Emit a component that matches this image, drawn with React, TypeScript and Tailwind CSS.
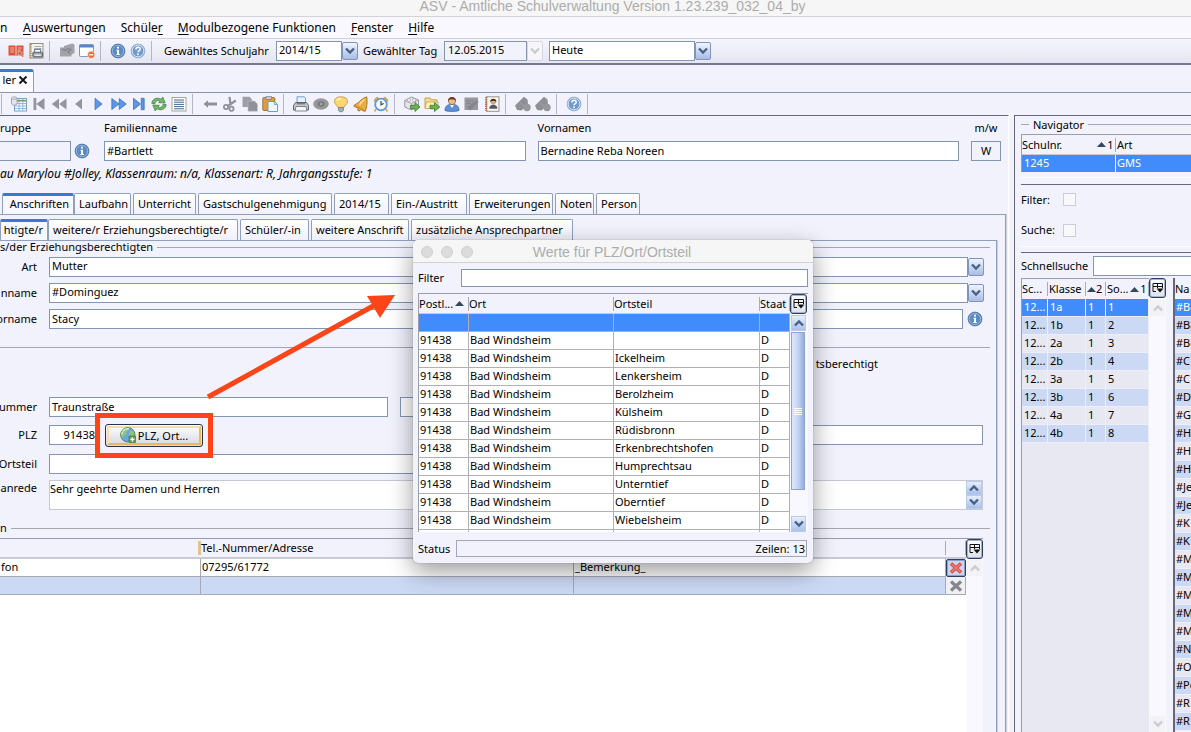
import React from "react";

const FIELD = "h-5 min-w-0 border border-[#8296b4] bg-white px-[2px] pb-[2px] outline-none";

/* ---------- icons ---------- */

type IconProps = { children: React.ReactNode; label: string };

function ToolButton({ children, label }: IconProps) {
  return (
    <button type="button" aria-label={label} className="flex h-5 w-5 shrink-0 items-center justify-center">
      <svg viewBox="0 0 16 16" className="h-4 w-4 overflow-visible">
        {children}
      </svg>
    </button>
  );
}

function Separator() {
  return <span className="h-5 w-px shrink-0 bg-[#b4b6c6]" />;
}

function InfoShape() {
  return (
    <>
      <circle cx="8" cy="8" r="6.9" fill="#5d8abf" stroke="#3f6795" strokeWidth="0.8" />
      <circle cx="8" cy="8" r="5.7" fill="none" stroke="#a3bfe0" strokeWidth="0.8" />
      <path d="M7 3.800h2v1.700H7zM6.500 6.700H9v4.300h.8v1H6.300v-1h.8V7.700h-.6z" fill="#fff" />
    </>
  );
}

function HelpShape() {
  return (
    <>
      <circle cx="8" cy="8" r="6.9" fill="#6f9bd0" stroke="#8aa4c6" strokeWidth="0.8" />
      <circle cx="8" cy="8" r="5.9" fill="none" stroke="#dfe9f6" strokeWidth="1" />
      <path d="M5.900 6.400c0-3 4.400-2.900 4.300-.2 0 1.500-2.100 1.500-2.100 3" fill="none" stroke="#fff" strokeWidth="1.500" />
      <circle cx="8.050" cy="11.200" r="0.950" fill="#fff" />
    </>
  );
}

const icons: Record<string, React.ReactNode> = {
  book: (
    <>
      <path d="M.5 2.500h6.500l1 .8 1-.8h6.500v10H9l-1 .8-1-.8H.5z" fill="#d9553a" />
      <path d="M8 3.300v9.500" stroke="#f7d3ca" strokeWidth="1" />
      <path d="M2.200 5h4M2.200 7h4M2.200 9h4M9.800 5h4M9.800 7h3" stroke="#f3c0b3" strokeWidth="0.900" />
      <path d="M10 8l4.800 1.500-1.600 1 2.500 2.800-1.200 1-2.500-2.800-1.200 1.500z" fill="#d9553a" stroke="#f7e6e2" strokeWidth="0.500" />
    </>
  ),
  printBook: (
    <>
      <rect x="2" y="0.500" width="13" height="14.500" fill="#f4f1ea" stroke="#8b8474" strokeWidth="0.900" />
      <path d="M2.800 1v14" stroke="#c49a4e" strokeWidth="2.200" strokeDasharray="1.200 1" />
      <path d="M6.500 3.500h7M6.500 5.500h7" stroke="#8aa3c2" strokeWidth="0.900" />
      <rect x="6.500" y="6.500" width="6" height="4" fill="#fff" stroke="#5f6873" strokeWidth="0.800" />
      <rect x="4.800" y="9.200" width="9.800" height="4.800" rx="1" fill="#9aa4b2" stroke="#4c5561" strokeWidth="0.900" />
      <path d="M6.500 12.200h6.400" stroke="#f4f4f4" strokeWidth="1.300" />
    </>
  ),
  puzzle: (
    <>
      <path d="M5 3l8-2.500 2.500 1v8.500l-3 1.500v2H1V4.500h4z" fill="#a2a3a8" />
      <path d="M3 6l3 1.500L9 5.500l3 1-3 2.500 2 1.500" fill="none" stroke="#808187" strokeWidth="1.100" />
    </>
  ),
  windowMinus: (
    <>
      <rect x="0.500" y="1.500" width="14" height="12" rx="0.800" fill="#fdfdff" stroke="#7d97bd" />
      <path d="M.5 2h14v2.500H.5z" fill="#5586cd" />
      <circle cx="12.200" cy="11.800" r="3.700" fill="#e8703a" stroke="#fff" strokeWidth="0.600" />
      <path d="M10.200 11.800h4" stroke="#fff" strokeWidth="1.300" />
    </>
  ),
  info: <InfoShape />,
  help: <HelpShape />,
  dataTable: (
    <>
      <rect x="3.500" y="2.500" width="12" height="12.500" fill="#f8fbff" stroke="#7ca0cb" />
      <path d="M4 7.500h11M4 10h11M4 12.500h11M8 3v12M11.800 3v12" stroke="#8fb0d8" strokeWidth="0.900" />
      <path d="M6 4.700h9" stroke="#6da157" strokeWidth="1.600" />
      <path d="M.5 2v6c0 1.500 5.500 1.500 5.500 0V2c0-1.500-5.500-1.500-5.500 0z" fill="#e3e4e8" stroke="#96989f" strokeWidth="0.800" />
      <path d="M.5 2.200c0 1.500 5.500 1.500 5.500 0" fill="none" stroke="#96989f" strokeWidth="0.700" />
    </>
  ),
  first: <path d="M2.500 2h2.800v12H2.500zM13.500 2v12L5.300 8z" fill="#92949e" />,
  rewind: <path d="M8 2.500v11L.8 8zM15.500 2.500v11L8.200 8z" fill="#92949e" />,
  prev: <path d="M11 2.500v11L4 8z" fill="#92949e" />,
  next: <path d="M4 2.200v11.600L11.200 8z" fill="#5c96e6" stroke="#3467b5" strokeWidth="0.600" />,
  forward: <path d="M.8 2.500v11L8 8zM8.200 2.500v11L15.300 8z" fill="#5c96e6" stroke="#3467b5" strokeWidth="0.700" />,
  last: <path d="M2.500 2.300v11.400L9.500 8zM10.200 2.300h3v11.400h-3z" fill="#5c96e6" stroke="#3467b5" strokeWidth="0.700" />,
  refresh: (
    <>
      <path d="M.8 7.500C1 3 6 .8 10.300 3.200L11.800 1l2.400 6-6.500-.3 1.300-1.700C6.200 3.800 4.200 5.500 4 7.700z" fill="#74b568" stroke="#3d7c3c" strokeWidth="0.700" />
      <path d="M15.200 8.500C15 13 10 15.200 5.700 12.800L4.200 15 1.800 9l6.500.3L7 11c2.800 1.200 4.800-.5 5-2.700z" fill="#74b568" stroke="#3d7c3c" strokeWidth="0.700" />
    </>
  ),
  list: (
    <>
      <rect x="1" y="1.500" width="14" height="13.500" fill="#fff" stroke="#a5a790" />
      <path d="M3 4h10M3 6.200h10M3 8.400h10M3 10.600h10M3 12.800h10" stroke="#45668e" strokeWidth="1" />
    </>
  ),
  back: <path d="M1.500 8l4.500-3.700v2.200h9v3H6v2.200z" fill="#8f9099" />,
  cut: (
    <>
      <path d="M7.500 .8l1.200 8.700M13.800 4.500L6 9.800" stroke="#8f9099" strokeWidth="2.200" fill="none" />
      <circle cx="4" cy="11" r="2.100" fill="none" stroke="#8f9099" strokeWidth="1.800" />
      <circle cx="9.500" cy="12.800" r="2.100" fill="none" stroke="#8f9099" strokeWidth="1.800" />
    </>
  ),
  copy: (
    <>
      <path d="M.5.8h7L10 3.500V11H.5z" fill="#9d9ea4" />
      <path d="M6 5h6.500L15.500 8v7.200H6z" fill="#909198" stroke="#c4c5cb" strokeWidth="0.600" />
    </>
  ),
  paste: (
    <>
      <rect x="0.800" y="1.500" width="12" height="13" rx="1" fill="#d99c4b" stroke="#9e6a27" strokeWidth="0.900" />
      <path d="M4 .5h5.500v3H4z" fill="#c8ccd4" stroke="#7b7f87" strokeWidth="0.700" />
      <path d="M6 5.500h6.500l3 3v7H6z" fill="#edf5ff" stroke="#6b90c2" strokeWidth="0.900" />
      <path d="M12.300 5.500v3h3" fill="none" stroke="#6b90c2" strokeWidth="0.800" />
    </>
  ),
  printer: (
    <>
      <path d="M4 .8h7L12.500 2v6H4z" fill="#e7f1fe" stroke="#6a94cc" strokeWidth="0.900" />
      <path d="M2.500 6.500h11l2 3v4.500H.5V9.500z" fill="#c3c6ce" stroke="#555961" strokeWidth="0.900" />
      <path d="M3 10.500h10l1 4.500H2z" fill="#f5f6f8" stroke="#6a6e76" strokeWidth="0.800" />
      <path d="M3.800 7.800h8.400" stroke="#5a5e66" strokeWidth="1" />
    </>
  ),
  eye: (
    <>
      <ellipse cx="8" cy="8" rx="7.800" ry="5.700" fill="#97979c" />
      <ellipse cx="8" cy="8" rx="3.500" ry="2.800" fill="#77777c" />
      <circle cx="8" cy="8" r="1.400" fill="#a5a5aa" />
    </>
  ),
  bulb: (
    <>
      <path d="M8 .8c-8 0-8 6.500-3.500 9.200l.5 1.500h6l.5-1.500C16 7.300 16 .8 8 .8z" fill="#fbd675" stroke="#d39b2f" strokeWidth="0.900" />
      <path d="M4 4.500c.8-1.600 2.200-2 4-2" stroke="#fff6d4" strokeWidth="1.600" fill="none" />
      <path d="M5.500 11.500h5v3l-1.200 1.200H6.700l-1.200-1.200z" fill="#a9adb5" stroke="#6f7279" strokeWidth="0.700" />
    </>
  ),
  bell: (
    <>
      <path d="M13.800.8c-3.300 1-6 3-8 5.500L.8 9.500l11.500 5.700C14 11.500 14.500 6 13.800.8z" fill="#e9ae3f" stroke="#a9721e" strokeWidth="0.900" />
      <path d="M.8 9.800l11.200 5.400" stroke="#c98a26" strokeWidth="1.800" />
      <path d="M11.500 3.500c-2 1.500-3.500 3-5 5.500" stroke="#fbe1a0" strokeWidth="1.500" fill="none" />
      <path d="M4.200 12.800a1.900 1.900 0 003.400 1.600z" fill="#a9721e" />
    </>
  ),
  clock: (
    <>
      <path d="M1 4l3-3 2 1.500L2 6zM15 4l-3-3-2 1.500L14 6z" fill="#e6a93f" stroke="#b07b25" strokeWidth="0.500" />
      <path d="M3 13l-1.500 2.500M13 13l1.500 2.500" stroke="#e0a33c" strokeWidth="1.500" />
      <circle cx="8" cy="8.500" r="5.800" fill="#f7fbff" stroke="#5c9ad4" strokeWidth="1.800" />
      <path d="M8 5v3.800l2.700-1.300" fill="none" stroke="#2f4767" strokeWidth="1.200" />
    </>
  ),
  boxExport: (
    <>
      <path d="M.8 4.500L7.500 1 14.500 4v6.500L7.500 14 .8 11z" fill="#e4e5e9" stroke="#8e9097" strokeWidth="0.900" />
      <path d="M.8 4.500l6.700 3 7-3.500M7.500 7.500V14" fill="none" stroke="#9b9da4" strokeWidth="0.800" />
      <circle cx="5" cy="4" r="1.500" fill="#fafafa" stroke="#9b9da4" strokeWidth="0.600" />
      <circle cx="10" cy="4" r="1.500" fill="#fafafa" stroke="#9b9da4" strokeWidth="0.600" />
      <path d="M6.500 9.300H11V6.500l5 4.500-5 4.500v-2.800H6.500z" fill="#6fb04f" stroke="#3c7a2e" strokeWidth="0.800" />
    </>
  ),
  folderExport: (
    <>
      <path d="M1 2h5l1.500 1.800H13V12H1z" fill="#f4dc93" stroke="#c19a3f" strokeWidth="0.900" />
      <path d="M2.500 6H14v6.500H1z" fill="#fdf0c0" stroke="#c19a3f" strokeWidth="0.700" />
      <path d="M6 9.300h4.500V6.500l5.300 4.500-5.300 4.500v-2.800H6z" fill="#6fb04f" stroke="#3c7a2e" strokeWidth="0.800" />
    </>
  ),
  person: (
    <>
      <path d="M1 14.500c0-5 3-6 7-6s7 1 7 6c-3 1.200-11 1.200-14 0z" fill="#5d90d6" stroke="#3463a3" strokeWidth="0.800" />
      <path d="M6 9l2 3 2-3z" fill="#fff" />
      <circle cx="8" cy="5" r="3.600" fill="#eabb8d" stroke="#7b4c24" strokeWidth="0.600" />
      <path d="M4 5.500C3.500-.5 12.500-.5 12 5.500 11 3.500 9 3.600 7 3.600 5.500 3.600 4.800 4 4 5.500z" fill="#70401c" />
    </>
  ),
  grayNote: (
    <>
      <rect x="0.500" y="1.500" width="13.500" height="12.500" fill="#97989d" />
      <path d="M3 11.500L12.500 4l2 2-8 8.500z" fill="#85868b" />
      <path d="M2.500 5h7M2.500 7.500h4" stroke="#828388" strokeWidth="1" />
    </>
  ),
  personBook: (
    <>
      <rect x="2.500" y="0.800" width="12.500" height="14.500" fill="#f8f6f2" stroke="#8f8a80" strokeWidth="0.900" />
      <path d="M2.200 1v14" stroke="#b8733f" strokeWidth="2.400" strokeDasharray="1.300 0.900" />
      <circle cx="9.300" cy="5.800" r="2.800" fill="#dba878" />
      <path d="M6.200 6C6 1.800 12.600 1.800 12.400 6c-2-1.800-4.200-1.800-6.200 0z" fill="#3d2a1c" />
      <path d="M5.300 12.800c0-3 1.700-4 4-4s4 1 4 4z" fill="#4f5866" />
    </>
  ),
  grayTag: (
    <>
      <path d="M0 9.500L9 .8l3.500 2.700.5 5-6.500 6-4.500-.5z" fill="#8f9096" />
      <circle cx="12" cy="11.500" r="3.700" fill="#97989e" />
      <path d="M5 6.500l4.500 4" stroke="#a9aab0" strokeWidth="0.700" />
    </>
  ),
};

function Tools({ names }: { names: string[] }) {
  return (
    <>
      {names.map((n, i) => (
        <ToolButton key={i} label={n}>
          {icons[n]}
        </ToolButton>
      ))}
    </>
  );
}

function Chevron({ up = false, muted = false }: { up?: boolean; muted?: boolean }) {
  return (
    <svg viewBox="0 0 10 8" className="h-2 w-[10px]">
      <path
        d={up ? "M1 6.500L5 2.500L9 6.500" : "M1 1.500L5 5.500L9 1.500"}
        fill="none"
        stroke={muted ? "#c9cad2" : "#4a6186"}
        strokeWidth="2.400"
      />
    </svg>
  );
}

function ScrollButton({ up = false, muted = false, label }: { up?: boolean; muted?: boolean; label: string }) {
  return (
    <button
      type="button"
      aria-label={label}
      className={
        muted
          ? "flex h-4 w-full shrink-0 items-center justify-center bg-[#f3f3f6]"
          : "flex h-4 w-full shrink items-center justify-center border border-[#b9cbea] bg-linear-to-b from-[#e6eefb] to-[#a9c1ea]"
      }
    >
      <Chevron up={up} muted={muted} />
    </button>
  );
}

function ColumnButton() {
  return (
    <button
      type="button"
      aria-label="Spalten"
      className="flex h-5 w-[17px] shrink-0 items-center justify-center rounded-[3px] border border-[#2b3d60] bg-linear-to-b from-white to-[#dfe1ea] shadow-[inset_0_0_0_1px_#a9b3c9]"
    >
      <svg viewBox="0 0 12 12" className="h-3 w-3 shrink-0">
        <path d="M1 9.500V1.500h9.500V6M1 4.500h9.500M5.500 1.500V6M1 9.500h3" fill="none" stroke="#111" strokeWidth="1" />
        <path d="M4.500 6.500h7L8 10.500z" fill="#111" />
      </svg>
    </button>
  );
}

function SortMark() {
  return (
    <svg viewBox="0 0 9 5" className="h-[5px] w-[9px] shrink-0">
      <path d="M0 5L4.500 0L9 5z" fill="#33475f" />
    </svg>
  );
}

type ComboProps = { id: string; value: string; className: string; muted?: boolean };

function Combo({ id, value, className, muted = false }: ComboProps) {
  return (
    <div className={`flex h-5 ${className}`}>
      <select
        id={id}
        disabled={muted}
        defaultValue={value}
        className={
          muted
            ? "h-5 min-w-0 flex-1 appearance-none border border-[#8296b4] bg-[#f2f2fd] px-[3px] pb-[2px] leading-4 text-black opacity-100"
            : "h-5 min-w-0 flex-1 appearance-none border border-[#8296b4] bg-white px-[2px] pb-[2px] leading-4 outline-none"
        }
      >
        <option>{value}</option>
      </select>
      <span
        className={
          muted
            ? "flex w-4 shrink-0 items-center justify-center rounded-[2px] border border-[#d6d7e0] bg-[#f6f6fa]"
            : "my-px flex w-4 shrink-0 items-center justify-center rounded-[2px] border border-[#7f95bb] bg-linear-to-b from-[#f0f5fd] to-[#a6bde6]"
        }
      >
        <Chevron muted={muted} />
      </span>
    </div>
  );
}

type TabDef = { text: string; width: string; active?: boolean };

function TabRow({ tabs }: { tabs: TabDef[] }) {
  return (
    <div role="tablist" className="flex h-[21px] shrink-0 items-end">
      {tabs.map((t) => (
        <button
          key={t.text}
          type="button"
          role="tab"
          aria-selected={!!t.active}
          className={`${t.width} shrink-0 overflow-hidden whitespace-nowrap ${
            t.active
              ? "h-[21px] rounded-t-[2px] border-x border-t-3 border-x-[#8ea0bd] border-t-[#3a78d8] bg-[#f7f8fe] pr-1 pb-[3px] text-right"
              : "mr-[2px] h-[21px] rounded-t-[2px] border border-b-0 border-[#8ea0bd] bg-linear-to-b from-white to-[#f0f0fa] pl-1 text-left"
          }`}
        >
          {t.text}
        </button>
      ))}
    </div>
  );
}

function GroupTitle({ text, className = "" }: { text: string; className?: string }) {
  return (
    <div className={`flex items-center gap-1 ${className}`}>
      <span className="shrink-0 whitespace-nowrap leading-[14px]">{text}</span>
      <span className="h-px flex-1 bg-[#a3a7b5]" />
    </div>
  );
}

function FormRow({ id, label, children }: { id: string; label: string; children: React.ReactNode }) {
  return (
    <div className="flex h-5 items-center">
      <label htmlFor={id} className="mr-3 flex w-[37px] shrink-0 justify-end whitespace-nowrap">
        {label}
      </label>
      {children}
    </div>
  );
}

/* ---------- data ---------- */

const mainTabs: TabDef[] = [
  { text: "Anschriften", width: "w-[72px]", active: true },
  { text: "Laufbahn", width: "w-[57px]" },
  { text: "Unterricht", width: "w-[63px]" },
  { text: "Gastschulgenehmigung", width: "w-[134px]" },
  { text: "2014/15", width: "w-[55px]" },
  { text: "Ein-/Austritt", width: "w-[76px]" },
  { text: "Erweiterungen", width: "w-[84px]" },
  { text: "Noten", width: "w-[39px]" },
  { text: "Person", width: "w-[44px]" },
];

const subTabs: TabDef[] = [
  { text: "htigte/r", width: "w-[48px]", active: true },
  { text: "weitere/r Erziehungsberechtigte/r", width: "w-[190px]" },
  { text: "Schüler/-in", width: "w-[69px]" },
  { text: "weitere Anschrift", width: "w-[98px]" },
  { text: "zusätzliche Ansprechpartner", width: "w-[162px]" },
];

const districts = [
  "",
  "Ickelheim",
  "Lenkersheim",
  "Berolzheim",
  "Külsheim",
  "Rüdisbronn",
  "Erkenbrechtshofen",
  "Humprechtsau",
  "Unterntief",
  "Oberntief",
  "Wiebelsheim",
];

const classes = ["1a", "1b", "2a", "2b", "3a", "3b", "4a", "4b"];

const names = [
  "#Ba", "#Ba", "#Be", "#C", "#C", "#D", "#G", "#H", "#H", "#H", "#Je", "#Je",
  "#K", "#K", "#M", "#M", "#M", "#M", "#M", "#N", "#O", "#Pe", "#R", "#R",
];

/* ---------- window parts ---------- */

function MenuItem({ before = "", hot, after = "" }: { before?: string; hot: string; after?: string }) {
  return (
    <button type="button" className="whitespace-nowrap">
      {before}
      <span className="underline underline-offset-2">{hot}</span>
      {after}
    </button>
  );
}

function Header() {
  return (
    <header className="shrink-0">
      <h1 className="flex h-[17px] items-center justify-center border-b border-[#d4d4d8] bg-[#f6f6f6] pb-[4px] pl-[34px] font-['Liberation_Sans',sans-serif] text-[14px] leading-[14px] text-[#acacac]">
        ASV - Amtliche Schulverwaltung Version 1.23.239_032_04_by
      </h1>
      <nav className="flex h-[22px] items-center gap-[15px] border-b border-[#cfcfda] bg-[#f8f8fe] text-[12px]">
        <span className="w-2">n</span>
        <MenuItem hot="A" after="uswertungen" />
        <MenuItem before="Schüle" hot="r" />
        <MenuItem hot="M" after="odulbezogene Funktionen" />
        <MenuItem hot="F" after="enster" />
        <MenuItem hot="H" after="ilfe" />
      </nav>
      <div className="flex h-[26px] items-center border-b-2 border-[#77788a] bg-linear-to-b from-[#f5f5fe] to-[#e6e6f2] pl-[6px]">
        <Tools names={["book", "printBook"]} />
        <span className="w-[3px]" />
        <Separator />
        <span className="w-[7px]" />
        <Tools names={["puzzle", "windowMinus"]} />
        <span className="w-[3px]" />
        <Separator />
        <span className="w-[7px]" />
        <Tools names={["info", "help"]} />
        <span className="w-[3px]" />
        <Separator />
        <label htmlFor="year" className="ml-3 w-28 whitespace-nowrap">Gewähltes Schuljahr</label>
        <Combo id="year" value="2014/15" className="w-[82px]" />
        <label htmlFor="day" className="ml-[5px] w-[81px] whitespace-nowrap">Gewählter Tag</label>
        <Combo id="day" value="12.05.2015" muted className="w-[99px]" />
        <Combo id="preset" value="Heute" className="ml-[6px] w-[162px]" />
      </div>
      <div className="flex h-[28px] items-end border-b border-[#8d93a8] bg-[#f2f2fd]">
        <div className="flex h-[23px] w-[34px] items-center gap-[2px] overflow-hidden rounded-tr-[3px] border-r border-t-3 border-r-[#8ea0bd] border-t-[#3a78d8] bg-[#fafaff] pb-[5px]">
          <span className="flex w-4 shrink-0 justify-end">ler</span>
          <button type="button" aria-label="Schließen">
            <svg viewBox="0 0 10 10" className="h-[10px] w-[10px]">
              <path d="M1.500 1.500L8.500 8.500M8.500 1.500L1.500 8.500" stroke="#111" strokeWidth="1.800" />
            </svg>
          </button>
        </div>
      </div>
      <div className="flex h-[22px] items-center bg-[#f2f2fd] pl-px">
        <Separator />
        <span className="w-[7px]" />
        <Tools names={["dataTable", "first", "rewind", "prev", "next", "forward", "last", "refresh", "list"]} />
        <span className="w-[3px]" />
        <Separator />
        <span className="w-[7px]" />
        <Tools names={["back", "cut", "copy", "paste"]} />
        <span className="w-[3px]" />
        <Separator />
        <span className="w-[7px]" />
        <Tools names={["printer", "eye", "bulb", "bell", "clock"]} />
        <span className="w-[3px]" />
        <Separator />
        <span className="w-[7px]" />
        <Tools names={["boxExport", "folderExport", "person", "grayNote", "personBook"]} />
        <span className="w-[3px]" />
        <Separator />
        <span className="w-[7px]" />
        <Tools names={["grayTag", "grayTag"]} />
        <span className="w-[3px]" />
        <Separator />
        <span className="w-[7px]" />
        <Tools names={["help"]} />
        <span className="w-[3px]" />
        <Separator />
      </div>
    </header>
  );
}

function PersonHead() {
  const caption = "flex h-[25px] items-center pb-[2px]";
  return (
    <>
      <div className="flex pr-1">
        <div className="w-[71px] shrink-0">
          <label htmlFor="group" className={caption}>ruppe</label>
          <input id="group" className="h-5 w-full border border-l-0 border-[#8296b4] bg-[#f2f2fd]" />
        </div>
        <button type="button" aria-label="Info" className="mt-[25px] ml-[3px] flex h-5 w-4 shrink-0 items-center">
          <svg viewBox="0 0 16 16" className="h-4 w-4"><InfoShape /></svg>
        </button>
        <div className="ml-[14px] flex-1">
          <label htmlFor="lastname" className={caption}>Familienname</label>
          <input id="lastname" defaultValue="#Bartlett" className={`w-full ${FIELD}`} />
        </div>
        <div className="ml-3 flex-1">
          <label htmlFor="firstname" className={caption}>Vornamen</label>
          <input id="firstname" defaultValue="Bernadine Reba Noreen" className={`w-full ${FIELD}`} />
        </div>
        <div className="ml-3 w-[30px]">
          <label htmlFor="sex" className={`justify-center ${caption}`}>m/w</label>
          <input id="sex" defaultValue="W" className="h-5 w-full border border-[#8296b4] bg-[#f2f2fd] pb-[2px] text-center" />
        </div>
      </div>
      <p className="flex h-[26px] items-center whitespace-nowrap text-[12px] italic">
        au Marylou #Jolley, Klassenraum: n/a, Klassenart: R, Jahrgangsstufe: 1
      </p>
    </>
  );
}

function PlzButton() {
  return (
    <div className="relative ml-[7px] shrink-0">
      <button
        type="button"
        className="flex h-[23px] w-[98px] items-center justify-center rounded-[3px] border border-[#24344f] bg-linear-to-b from-white to-[#d5d7e2] p-px"
      >
        <span className="flex h-full w-full items-center justify-center gap-[2px] border-2 border-[#e9b85f] border-t-[#f6ddab] border-l-[#f6ddab]">
          <svg viewBox="0 0 16 16" className="h-4 w-4">
            <circle cx="7.800" cy="7.800" r="7.200" fill="#6aa7dc" stroke="#4b8149" strokeWidth="0.900" />
            <path d="M2 4c2-3 5-3.500 7-3L8 4 6 5.500l1 2-3 1L2.500 12C.5 9 .8 6 2 4zM10 3.500l3 .5 1.500 4-2.500 4-2-1-1-3.500z" fill="#8cc47e" />
            <path d="M3 4C4.500 2 7 1.500 9 1.800M2 7.500c0-1 .3-2 .8-3" stroke="#d5edcd" strokeWidth="1.400" fill="none" />
            <rect x="9" y="9" width="6.800" height="6.800" rx="1" fill="#5ea344" stroke="#2f6e27" strokeWidth="0.600" />
            <path d="M12.400 10.300v4.200M10.300 12.400h4.200" stroke="#fff" strokeWidth="1.400" />
          </svg>
          <span className="leading-[15px]">PLZ, Ort...</span>
        </span>
      </button>
      <span className="pointer-events-none absolute -inset-x-[10px] -inset-y-[11px] border-5 border-[#fb4418]" />
    </div>
  );
}

function ContactTable() {
  const head = "border-b-2 border-[#c9cad4] p-0 font-normal";
  const cell = "border-r border-b border-[#a7a9b5] py-0 pr-0 pl-px align-top leading-4";
  return (
    <div className="flex min-h-0 flex-1 pr-[7px]">
      <div className="min-w-0 flex-1 border-t border-[#9a9dab] bg-white">
        <table className="w-full table-fixed border-separate border-spacing-0 text-left">
          <colgroup>
            <col className="w-[201px]" />
            <col className="w-[373px]" />
            <col />
            <col className="w-5" />
          </colgroup>
          <thead>
            <tr className="h-5 bg-[#f2f2fd]">
              <th className={head}>
                <span className="ml-auto block h-[14px] w-[3px] bg-[#e0c48f]" />
              </th>
              <th className={head}>Tel.-Nummer/Adresse</th>
              <th className={head}>
                <span className="ml-auto block h-[14px] w-px bg-[#a9abb8]" />
              </th>
              <th className={head}>
                <span className="ml-auto block h-[14px] w-px bg-[#a9abb8]" />
              </th>
            </tr>
          </thead>
          <tbody>
            <tr className="h-[18px]">
              <td className={cell}>fon</td>
              <td className={cell}>07295/61772</td>
              <td className={cell}>_Bemerkung_</td>
              <td className="p-0 align-top">
                <button type="button" aria-label="Löschen" className="flex h-[18px] w-full items-center justify-center rounded-[2px] border border-[#2b3d60] bg-[#c9d6f0] shadow-[inset_0_0_0_1px_#8da0c6]">
                  <svg viewBox="0 0 14 12" className="h-3 w-[14px]">
                    <path d="M2 1.500l10 9M12 1.500l-10 9" stroke="#d8423c" strokeWidth="3.400" />
                    <path d="M2.500 2l9 8M11.500 2l-9 8" stroke="#f08078" strokeWidth="1.600" />
                  </svg>
                </button>
              </td>
            </tr>
            <tr className="h-[18px] bg-[#ccd9f5]">
              <td className={cell} />
              <td className={cell} />
              <td className={cell} />
              <td className="border-r border-b border-[#a7a9b5] bg-[#f0f0f4] p-0 align-top">
                <button type="button" aria-label="Löschen" className="flex h-[17px] w-full items-center justify-center">
                  <svg viewBox="0 0 14 12" className="h-3 w-[14px]">
                    <path d="M2 1.500l10 9M12 1.500l-10 9" stroke="#85868d" strokeWidth="3.200" />
                  </svg>
                </button>
              </td>
            </tr>
          </tbody>
        </table>
      </div>
      <div className="w-[17px] shrink-0 border-t border-[#9a9dab] bg-[#f8f8fe]">
        <ColumnButton />
        <div className="p-px">
          <ScrollButton up muted label="Nach oben" />
        </div>
      </div>
    </div>
  );
}

function AddressForm() {
  return (
    <div className="mr-2 flex min-h-0 flex-1 flex-col border-t border-r border-[#8ea0bd] pr-[6px] shadow-[1px_0_0_#c9cede]">
      <GroupTitle text="s/der Erziehungsberechtigten" className="h-4 pb-1" />
      <div className="flex flex-col gap-[6px] pr-[6px]">
        <FormRow id="kind" label="Art">
          <Combo id="kind" value="Mutter" className="min-w-0 flex-1" />
        </FormRow>
        <FormRow id="guardian" label="nname">
          <Combo id="guardian" value="#Dominguez" className="min-w-0 flex-1" />
        </FormRow>
        <FormRow id="guardianFirst" label="orname">
          <input id="guardianFirst" defaultValue="Stacy" className={`flex-1 ${FIELD}`} />
          <button type="button" aria-label="Info" className="mr-px ml-[4px]">
            <svg viewBox="0 0 16 16" className="h-4 w-4"><InfoShape /></svg>
          </button>
        </FormRow>
      </div>
      <div className="mt-[18px] h-px shrink-0 bg-[#a3a7b5]" />
      <p className="flex h-8 shrink-0 items-center justify-end pr-28">tsberechtigt</p>
      <div className="mt-[17px] flex flex-col pr-[7px]">
        <FormRow id="street" label="ummer">
          <input id="street" defaultValue="Traunstraße" className={`w-[339px] ${FIELD}`} />
          <input aria-label="Hausnummer" className={`ml-3 w-[160px] ${FIELD}`} />
        </FormRow>
        <div className="mt-2">
          <FormRow id="plz" label="PLZ">
            <input id="plz" defaultValue="91438" className={`w-[49px] text-right ${FIELD}`} />
            <PlzButton />
            <input aria-label="Ort" className={`ml-[247px] flex-1 ${FIELD}`} />
          </FormRow>
        </div>
        <div className="mt-[9px]">
          <FormRow id="district" label="Ortsteil">
            <input id="district" className={`w-[511px] ${FIELD}`} />
          </FormRow>
        </div>
        <div className="mt-[6px] flex h-[30px]">
          <label htmlFor="salutation" className="mr-3 flex h-[15px] w-[37px] shrink-0 items-center justify-end">
            anrede
          </label>
          <div className="flex min-w-0 flex-1 border border-[#c6c8d4] bg-white">
            <textarea
              id="salutation"
              defaultValue="Sehr geehrte Damen und Herren"
              className="min-w-0 flex-1 resize-none overflow-hidden leading-[15px] outline-none"
            />
            <div className="flex w-4 shrink-0 flex-col">
              <ScrollButton up label="Zeile hoch" />
              <ScrollButton label="Zeile runter" />
            </div>
          </div>
        </div>
      </div>
      <GroupTitle text="n" className="mt-[9px] h-[19px] shrink-0 pb-px" />
      <ContactTable />
    </div>
  );
}

function Navigator() {
  const cell = "border-r border-b border-[#eeeef8] py-0 pr-0 pl-[2px] align-top leading-4";
  return (
    <aside className="flex w-[177px] shrink-0 flex-col border-t border-l border-[#66677a] pl-[6px]">
      <div className="flex h-[18px] shrink-0 items-center gap-1 pb-px">
        <span className="h-px w-2 bg-[#a3a7b5]" />
        <h2>Navigator</h2>
        <span className="h-px flex-1 bg-[#a3a7b5]" />
      </div>
      <table className="w-full shrink-0 table-fixed border-separate border-spacing-0 border-t border-l border-[#9a9dab] text-left">
        <colgroup>
          <col className="w-[94px]" />
          <col />
        </colgroup>
        <thead>
          <tr className="h-5">
            <th className="border-b border-[#c9cad4] p-0 font-normal">
              <span className="flex items-center border-r border-[#a9abb8] leading-[14px]">
                <span className="flex-1">Schulnr.</span>
                <SortMark />
                <span className="w-[9px] text-center">1</span>
              </span>
            </th>
            <th className="border-b border-[#c9cad4] p-0 pl-px font-normal">Art</th>
          </tr>
        </thead>
        <tbody>
          <tr className="h-[17px] bg-[#418cfb] text-white">
            <td className="border-r border-white py-0 pr-0 pl-[2px] align-top leading-4">1245</td>
            <td className="py-0 pr-0 pl-px align-top leading-4">GMS</td>
          </tr>
        </tbody>
      </table>
      <div className="mt-[5px] h-px shrink-0 bg-white" />
      <div className="mt-[6px] h-px shrink-0 bg-[#66677a]" />
      <div className="flex h-[29px] shrink-0 items-center">
        <label htmlFor="filterOn" className="w-[42px]">Filter:</label>
        <input id="filterOn" type="checkbox" className="h-[13px] w-[13px] appearance-none border border-[#cccdd6] bg-[#f8f8fa]" />
      </div>
      <div className="flex h-[32px] shrink-0 items-center">
        <label htmlFor="searchOn" className="w-[42px]">Suche:</label>
        <input id="searchOn" type="checkbox" className="h-[13px] w-[13px] appearance-none border border-[#cccdd6] bg-[#f8f8fa]" />
      </div>
      <div className="h-px shrink-0 bg-white" />
      <div className="mt-[5px] h-px shrink-0 bg-[#66677a]" />
      <div className="flex h-[25px] shrink-0 items-center">
        <label htmlFor="quick" className="w-[72px] shrink-0 whitespace-nowrap">Schnellsuche</label>
        <input id="quick" className="h-5 min-w-0 flex-1 border border-r-0 border-[#8296b4] bg-white" />
      </div>
      <div className="flex min-h-0 flex-1">
        <div className="w-[128px] shrink-0 border-t border-l border-[#9a9dab] bg-[#e8e8f2]">
          <table className="w-full table-fixed border-separate border-spacing-0 text-left">
            <colgroup>
              <col className="w-[26px]" />
              <col className="w-[38px]" />
              <col className="w-[20px]" />
              <col />
            </colgroup>
            <thead>
              <tr className="h-5 bg-[#f2f2fd]">
                <th className="p-0 font-normal"><span className="block border-r border-[#a9abb8] leading-[14px]">Sc...</span></th>
                <th className="p-0 font-normal"><span className="block border-r border-[#a9abb8] pl-px leading-[14px]">Klasse</span></th>
                <th className="p-0 font-normal">
                  <span className="flex items-center border-r border-[#a9abb8] pl-px leading-[14px]"><SortMark />2</span>
                </th>
                <th className="p-0 font-normal">
                  <span className="flex items-center border-r border-[#a9abb8] pl-px leading-[14px]">
                    <span className="flex-1">So...</span>
                    <SortMark />
                    <span className="w-[9px] text-center">1</span>
                  </span>
                </th>
              </tr>
            </thead>
            <tbody>
              {classes.map((c, i) => (
                <tr
                  key={c}
                  className={
                    i === 0 ? "h-[18px] bg-[#418cfb] text-white" : i % 2 ? "h-[18px] bg-[#ccd9f5]" : "h-[18px] bg-[#e8e8f2]"
                  }
                >
                  <td className={cell}>12...</td>
                  <td className={cell}>{c}</td>
                  <td className={cell}>1</td>
                  <td className={cell}>{i + 1}</td>
                </tr>
              ))}
            </tbody>
          </table>
        </div>
        <div className="flex w-[17px] shrink-0 flex-col bg-[#f8f8fe]">
          <ColumnButton />
          <div className="flex flex-1 flex-col justify-between px-px pt-[2px]">
            <ScrollButton up muted label="Nach oben" />
            <ScrollButton muted label="Nach unten" />
          </div>
        </div>
        <div className="ml-[7px] min-w-0 flex-1 overflow-hidden border-l-2 border-[#66677a]">
          <table className="w-full table-fixed border-separate border-spacing-0 text-left">
            <thead>
              <tr className="h-[21px] bg-[#f2f2fd]">
                <th className="p-0 font-normal">Na</th>
              </tr>
            </thead>
            <tbody>
              {names.map((n, i) => (
                <tr
                  key={i}
                  className={
                    i === 0 ? "h-[18px] bg-[#418cfb] text-white" : i % 2 ? "h-[18px] bg-[#ccd9f5]" : "h-[18px] bg-[#e8e8f2]"
                  }
                >
                  <td className="border-b border-[#eeeef8] py-0 pr-0 pl-px align-top leading-4">{n}</td>
                </tr>
              ))}
            </tbody>
          </table>
        </div>
      </div>
    </aside>
  );
}

function ValueDialog() {
  const head = "border-b border-[#c9cad4] p-0 font-normal";
  const cell = "whitespace-nowrap border-r border-b border-[#b0b1b8] py-0 pr-0 pl-px align-top leading-4";
  return (
    <section
      role="dialog"
      aria-label="Werte für PLZ/Ort/Ortsteil"
      className="absolute top-[240px] left-[413px] flex h-[323px] w-[400px] flex-col overflow-hidden rounded-[5px] bg-[#f2f2fd] shadow-[0_8px_24px_rgba(0,0,0,0.4),0_0_1px_rgba(0,0,0,0.5)]"
    >
      <div className="flex h-[23px] shrink-0 items-center border-b border-[#d2d2d2] bg-[#f6f6f6] px-2 pt-px">
        <div className="flex gap-2">
          <button type="button" aria-label="Schließen" className="h-3 w-3 rounded-full border border-[#cfcfcf] bg-[#dcdcdc]" />
          <button type="button" aria-label="Minimieren" className="h-3 w-3 rounded-full border border-[#cfcfcf] bg-[#dcdcdc]" />
          <button type="button" aria-label="Vergrößern" className="h-3 w-3 rounded-full border border-[#cfcfcf] bg-[#dcdcdc]" />
        </div>
        <h2 className="flex-1 pt-px pr-[54px] text-center font-['Liberation_Sans',sans-serif] text-[14px] text-[#acacac]">
          Werte für PLZ/Ort/Ortsteil
        </h2>
      </div>
      <div className="flex h-[30px] shrink-0 items-center px-[5px] pb-px">
        <label htmlFor="dlgFilter" className="w-[43px]">Filter</label>
        <input id="dlgFilter" className="h-[18px] min-w-0 flex-1 border border-[#8296b4] bg-white outline-none" />
      </div>
      <div className="mx-[5px] flex h-[239px] shrink-0 overflow-hidden border-t border-[#9a9dab]">
        <div className="min-w-0 flex-1 overflow-hidden border-l border-[#9a9dab] bg-white">
          <table className="w-full table-fixed border-separate border-spacing-0 text-left">
            <colgroup>
              <col className="w-[50px]" />
              <col className="w-[145px]" />
              <col className="w-[146px]" />
              <col />
            </colgroup>
            <thead>
              <tr className="h-5 bg-[#f2f2fd]">
                <th className={head}>
                  <span className="flex items-center border-r border-[#a9abb8] pr-1 leading-[14px]">
                    <span className="flex-1">Postl...</span>
                    <SortMark />
                  </span>
                </th>
                <th className={head}><span className="block border-r border-[#a9abb8] leading-[14px]">Ort</span></th>
                <th className={head}><span className="block border-r border-[#a9abb8] leading-[14px]">Ortsteil</span></th>
                <th className={head}><span className="block border-r border-[#a9abb8] leading-[14px]">Staat</span></th>
              </tr>
            </thead>
            <tbody>
              <tr className="h-[18px] bg-[#418cfb]">
                <td className={cell} />
                <td className={cell} />
                <td className={cell} />
                <td className={cell} />
              </tr>
              {districts.map((d) => (
                <tr key={d} className="h-[18px]">
                  <td className={cell}>91438</td>
                  <td className={cell}>Bad Windsheim</td>
                  <td className={cell}>{d}</td>
                  <td className={cell}>D</td>
                </tr>
              ))}
              <tr className="h-[18px]">
                <td className={cell} />
                <td className={cell} />
                <td className={cell} />
                <td className={cell} />
              </tr>
            </tbody>
          </table>
        </div>
        <div className="flex w-[18px] shrink-0 flex-col bg-[#f8f8fe] pr-px">
          <ColumnButton />
          <div className="flex min-h-0 flex-1 flex-col px-px pt-px">
            <ScrollButton up label="Nach oben" />
            <div className="mt-px flex h-[158px] w-[14px] shrink-0 flex-col items-center justify-center gap-px border border-[#8fa5d0] bg-linear-to-r from-[#dde8fb] via-[#c3d4f6] to-[#94aedd]">
              <span className="h-px w-2 bg-white" />
              <span className="h-px w-2 bg-white" />
              <span className="h-px w-2 bg-white" />
              <span className="h-px w-2 bg-white" />
            </div>
            <span className="flex-1" />
            <ScrollButton label="Nach unten" />
          </div>
        </div>
      </div>
      <div className="flex flex-1 items-center pt-2 pr-[6px] pb-[6px] pl-[5px]">
        <span className="w-[38px]">Status</span>
        <output className="flex h-[17px] flex-1 items-center justify-end border border-[#a3a7b5] pr-px">Zeilen: 13</output>
      </div>
    </section>
  );
}

export default function App() {
  return (
    <div className="relative flex h-screen flex-col overflow-hidden bg-[#f2f2fd] font-['Noto_Sans',sans-serif] text-[11px] leading-4 text-black">
      <Header />
      <main className="flex min-h-0 flex-1">
        <div className="flex min-w-0 flex-1 flex-col border-t border-r border-t-[#66677a] border-r-white pr-[2px]">
          <div className="pr-px">
            <PersonHead />
          </div>
          <div className="pt-[6px] pl-[2px]">
            <TabRow tabs={mainTabs} />
          </div>
          <div className="flex min-h-0 flex-1 flex-col border-t border-r border-[#8ea0bd] pt-1 shadow-[1px_0_0_#c9cede]">
            <TabRow tabs={subTabs} />
            <AddressForm />
          </div>
        </div>
        <div className="w-[5px] shrink-0" />
        <Navigator />
      </main>
      <svg viewBox="0 0 200 116" className="pointer-events-none absolute top-[285px] left-[200px] h-[116px] w-[200px]">
        <path d="M8 112L175 20" stroke="#fb4418" strokeWidth="5" />
        <path d="M195 10L167 11L180 33z" fill="#fb4418" />
      </svg>
      <ValueDialog />
    </div>
  );
}
